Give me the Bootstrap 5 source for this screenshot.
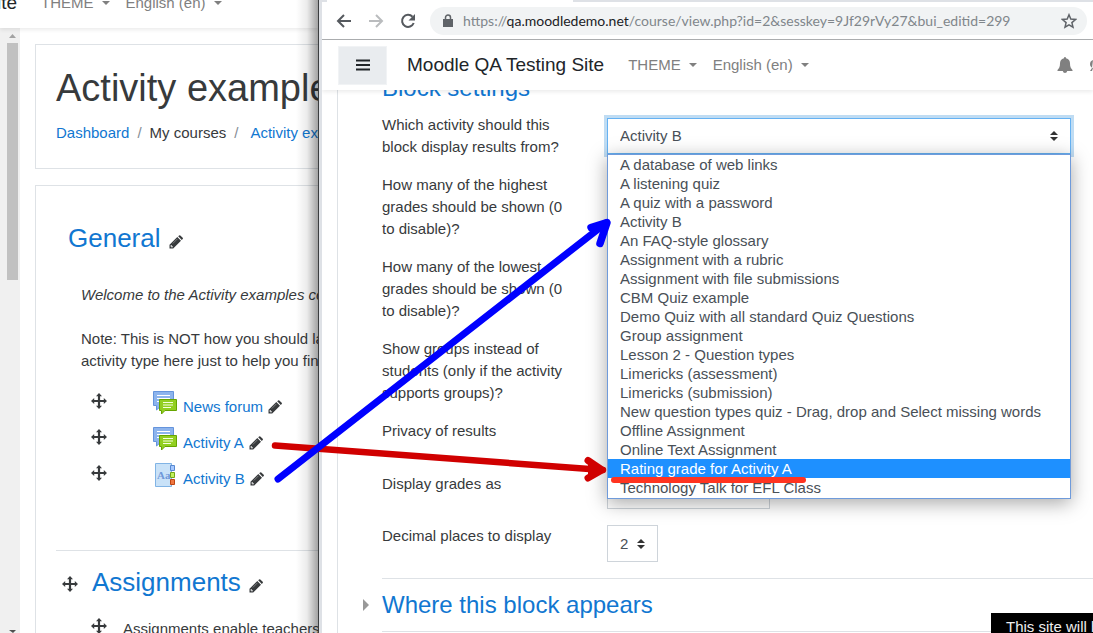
<!DOCTYPE html>
<html lang="en">
<head>
<meta charset="utf-8">
<meta name="viewport" content="width=device-width, initial-scale=1">
<title>Moodle QA Testing Site</title>
<link href="https://cdn.jsdelivr.net/npm/bootstrap@5.3.0/dist/css/bootstrap.min.css" rel="stylesheet">
<style>
body{font-family:"Liberation Sans",Arial,sans-serif;font-size:15px;line-height:22px;color:#373a3c}
a{color:#1177d1;text-decoration:none}
h1,h2,h3{font-weight:400;margin:0}
h1{font-size:38px;line-height:46px}
h2,h3{color:#1177d1}
h2{font-size:26px;line-height:32px}
h3{font-size:24px;line-height:28px}
svg{display:block;flex:none}
.back-window{flex:0 0 318px}
.back-window::after{content:"";position:absolute;top:0;bottom:0;right:0;width:22px;background:linear-gradient(90deg,transparent,rgba(0,0,0,.08) 50%,rgba(0,0,0,.36));z-index:3}
.front-window{border-left:1px solid #3c3e40;min-width:0}
.frame-edge{width:3px;background:#dee1e6}
.site-bar{height:50px;flex:none;color:#808080}
.bar-clip{height:28px;box-shadow:0 2px 4px rgba(0,0,0,.08);z-index:2}
.bar-shadow{box-shadow:0 2px 4px rgba(0,0,0,.08);z-index:2}
.site-name{font-size:19px;color:#212529}
.name-end{width:17px}
.menu-link{color:#808080}
.menu-link::after{margin-left:8px;border-top-width:4px;border-left-width:4px;border-right-width:4px;vertical-align:3px}
.scroll-track{flex:0 0 20px;background:#f0f0f0;padding:6px 2px 0 7px}
.scroll-thumb{height:237px;background:#c1c1c1}
.course-page{margin-left:15px}
.panel{border:1px solid #dee2e6;border-right:0;background:#fff}
.panel-head{padding:20px 0 24px 20px}
.panel-body{padding:36px 0 0 20px}
.crumbs{padding-top:11px}
.crumb-sep{color:#868e96;margin:0 8px}
.crumb-last{margin-left:4px}
.section-text{padding:30px 0 13px 25px}
.section-text p{margin:0 0 22px}
.section-text p:last-child{margin:0}
.activity-row{height:36px;padding-left:35px}
.activity-icon{margin-left:46px;padding-top:6px}
.activity-name{margin-left:6px;padding-top:11px}
.activity-rule{border-top:1px solid #dee2e6;margin-top:57px;padding-top:15px}
.section-title{padding-left:6px;gap:14px}
.tab-strip{height:2px;background:#dee1e6;padding-left:5px}
.tab-strip span{width:246px;background:#fff}
.toolbar{height:38px;border-bottom:1px solid #acaeb0;padding:0 6px 0 12px;gap:12px}
.omnibox{height:28px;background:#f1f3f4;border-radius:14px;padding:0 10px 0 12px;min-width:0}
.url-text{font-family:Lato,"Noto Sans",sans-serif;font-size:14px;color:#80868b;margin-left:9px}
.url-text b{font-weight:400;color:#202124}
.icon-btn{border:0;background:none;padding:0}
.hamburger{width:49px;height:39px;background:#e9ecef;border:1px solid #f1f3f5}
.front-name{margin-left:20px}
.form-area{border-left:1px solid #dee2e6;margin-left:15px;padding-left:44px}
.head-clip{height:12px}
.fields{padding-top:12px}
.field-row{gap:40px;padding:0 22px 16px 0}
.field-row label{flex:0 0 185px}
.select-box{height:37px;border:1px solid #ced4da;border-radius:0;padding:0 12px;color:#495057;font-size:15px;line-height:22px;appearance:none;background:#fff url("data:image/svg+xml,%3Csvg xmlns='http://www.w3.org/2000/svg' viewBox='0 0 8 10'%3E%3Cpath fill='%23333' d='M4 0 0 4h8zM0 6l4 4 4-4z'/%3E%3C/svg%3E") no-repeat right 12px center/8px 10px}
.select-focus{border-color:#66b2f3;box-shadow:0 0 0 3px #bfdcf3}
.select-focus,.select-short{height:36px}
.w-small{width:51px}.w-mid{width:163px}
.option-menu{top:100%;left:0;right:0;border:1px solid #6f9bdb;padding-bottom:1px;color:#495057;line-height:19px;box-shadow:0 4px 18px rgba(0,0,0,.35);z-index:3}
.option-menu li{padding:0 12px;white-space:nowrap}
.option-menu .chosen{background:#1e90ff;color:#fff}
.section-rule{border-top:1px solid #dee2e6}
.section-head{height:52px;margin-left:-19px;gap:13px}
.reset-note{right:0;bottom:0;width:102px;height:20px;background:#000;color:#eee;padding:3px 0 0 15px;z-index:4}
.marks{inset:0;z-index:5;pointer-events:none}
</style>
</head>
<body>
<svg width="0" height="0" class="position-absolute" aria-hidden="true">
<symbol id="pencil" viewBox="0 0 14 14"><path fill="#373a3c" d="M.5 13.5V9.800L8.300 2l3.700 3.700-7.800 7.800zM9.200 1.200l.9-.8q.6-.5 1.200 0l2.400 2.400q.5.6 0 1.200l-.9.900z"/><path fill="#fff" d="M1.500 10.800l.7-.7 1.700 1.700-.7.700h-.7v-1h-1z"/><path stroke="#aaa" stroke-width=".6" d="M3.800 8.500l4.600-4.600"/></symbol>
<symbol id="move" viewBox="0 0 16 16"><path fill="#373a3c" d="M8 0l3 3.200H9.100v3.700h3.700V5L16 8l-3.200 3V9.100H9.100v3.700H11L8 16l-3-3.200h1.900V9.100H3.200V11L0 8l3.200-3v1.900h3.700V3.200H5z"/></symbol>
<symbol id="forum" viewBox="0 0 24 24"><path fill="#8db4ed" stroke="#6594dc" d="M.5.5h20v14H8.500L3.500 19v-4.500h-3z"/><path stroke="#fff" d="M4 4.500h13M4 7.500h13M4 10.500h13"/><path fill="#92cf20" stroke="#66a500" d="M6.500 8.500h17v11H12L8.500 23v-3.500h-2z"/><path stroke="#f4ffdd" d="M10 11.500h10M10 14h10M10 16.500h8"/></symbol>
<symbol id="bell" viewBox="0 0 16 16"><path fill="#808080" d="M8 0q1 0 1 1.200C12 1.700 13 4 13 6.500c0 3.500 1 5 2.500 6.500v1h-5.300q-.3 2-2.200 2t-2.200-2H.5v-1C2 11.500 3 10 3 6.500 3 4 4 1.700 7 1.200 7 .3 7.500 0 8 0z"/></symbol>
</svg>
<div class="d-flex vh-100 overflow-hidden position-relative">
  <section class="back-window position-relative overflow-hidden d-flex flex-column text-nowrap">
    <header class="bar-clip position-relative bg-white">
      <div class="h-100 overflow-hidden d-flex align-items-end">
        <div class="site-bar d-flex align-items-center">
          <span class="site-name name-end d-flex justify-content-end">ite</span>
          <a href="#" class="menu-link dropdown-toggle ms-4">THEME</a>
          <a href="#" class="menu-link dropdown-toggle ms-3">English (en)</a>
        </div>
      </div>
    </header>
    <div class="d-flex flex-grow-1 overflow-hidden">
      <div class="scroll-track d-flex flex-column">
        <svg class="mx-auto mb-1" width="7" height="5"><path d="M0 4 3.500 0 7 4z" fill="#a3a3a3"/></svg>
        <div class="scroll-thumb"></div>
        <svg class="mx-auto mt-auto" width="7" height="3"><path d="M0 0h7L4 3z" fill="#505050"/></svg>
      </div>
      <main class="course-page flex-grow-1 pt-3 overflow-hidden">
        <div class="panel panel-head mb-3">
          <h1>Activity examples</h1>
          <nav class="crumbs d-flex"><a href="#">Dashboard</a><span class="crumb-sep">/</span>My courses<span class="crumb-sep">/</span><a href="#" class="crumb-last">Activity examples</a></nav>
        </div>
        <div class="panel panel-body h-100">
          <div class="d-flex align-items-center gap-2 ps-2 ms-1"><h2>General</h2><svg class="mt-2" width="14" height="14"><use href="#pencil"/></svg></div>
          <div class="section-text"><p><em>Welcome to the Activity examples course</em></p><p>Note: This is NOT how you should lay<br>activity type here just to help you find</p></div>
          <div class="activity-row d-flex"><svg class="mt-2" width="16" height="16"><use href="#move"/></svg><div class="activity-icon"><svg width="24" height="24"><use href="#forum"/></svg></div><div class="activity-name d-flex gap-1"><a href="#">News forum</a><svg class="mt-1" width="16" height="14"><use href="#pencil"/></svg></div></div>
          <div class="activity-row d-flex"><svg class="mt-2" width="16" height="16"><use href="#move"/></svg><div class="activity-icon"><svg width="24" height="24"><use href="#forum"/></svg></div><div class="activity-name d-flex gap-1"><a href="#">Activity A</a><svg class="mt-1" width="16" height="14"><use href="#pencil"/></svg></div></div>
          <div class="activity-row d-flex"><svg class="mt-2" width="16" height="16"><use href="#move"/></svg><div class="activity-icon"><svg width="24" height="24"><path fill="#c9e2f8" stroke="#81b4e5" d="M2.500.5h16v23h-16z"/><text x="4" y="16" font-family="Liberation Serif,serif" font-weight="bold" font-size="11" fill="#6f98d8">Aa</text><path fill="#a5c8ff" stroke="#5788d0" d="M17.500 2.500h4v5h-4z"/><path fill="#c1f05b" stroke="#73a717" d="M17.500 9.500h4v5h-4z"/><path fill="#ef7640" stroke="#bd4513" d="M17.500 16.500h4v5h-4z"/></svg></div><div class="activity-name d-flex gap-1"><a href="#">Activity B</a><svg class="mt-1" width="16" height="14"><use href="#pencil"/></svg></div></div>
          <div class="activity-rule"></div>
          <div class="section-title d-flex align-items-center"><svg class="mt-1" width="16" height="16"><use href="#move"/></svg><div class="d-flex align-items-center gap-2"><h2>Assignments</h2><svg class="mt-2" width="14" height="14"><use href="#pencil"/></svg></div></div>
          <div class="activity-row d-flex mt-3"><svg class="mt-1" width="16" height="16"><use href="#move"/></svg><span class="ms-3 pt-1">Assignments enable teachers</span></div>
        </div>
      </main>
    </div>
  </section>

  <section class="front-window flex-grow-1 d-flex bg-white">
    <div class="frame-edge flex-shrink-0"></div>
    <div class="flex-grow-1 overflow-hidden d-flex flex-column">
      <div class="tab-strip d-flex"><span></span></div>
      <div class="toolbar d-flex align-items-center flex-shrink-0">
        <button class="icon-btn" aria-label="Back"><svg width="20" height="20" fill="none" stroke="#55595e" stroke-width="2"><path d="M17 10H4M10 4l-6 6 6 6"/></svg></button>
        <button class="icon-btn" aria-label="Forward"><svg width="20" height="20" fill="none" stroke="#babcbe" stroke-width="2"><path d="M3 10h13M10 4l6 6-6 6"/></svg></button>
        <button class="icon-btn" aria-label="Reload"><svg width="20" height="20"><path d="M14.500 5.800A6 6 0 1 0 15.700 12" fill="none" stroke="#55595e" stroke-width="2"/><path d="M17 3v6.500h-6.500z" fill="#55595e"/></svg></button>
        <div class="omnibox d-flex align-items-center flex-grow-1">
          <svg width="12" height="14"><path d="M1 5h10v8H1z" fill="#5f6368"/><path d="M3.500 5V3.500a2.500 2.500 0 0 1 5 0V5" fill="none" stroke="#5f6368" stroke-width="1.500"/></svg>
          <span class="url-text text-nowrap flex-grow-1">https://<b>qa.moodledemo.net</b>/course/view.php?id=2&amp;sesskey=9Jf29rVy27&amp;bui_editid=299</span>
          <button class="icon-btn" aria-label="Bookmark"><svg width="16" height="16"><path d="m8 1.800 1.800 4.300 4.700.4-3.600 3.100 1.100 4.600L8 11.800l-4 2.400 1.100-4.600-3.600-3.100 4.700-.4z" fill="none" stroke="#5f6368" stroke-width="1.500"/></svg></button>
        </div>
      </div>
      <header class="site-bar bar-shadow position-relative bg-white d-flex align-items-center ps-3">
        <button class="hamburger d-flex align-items-center justify-content-center p-0" aria-label="Menu"><svg width="14" height="12"><path d="M0 1.500h14M0 6h14M0 10.500h14" stroke="#212529" stroke-width="2"/></svg></button>
        <a href="#" class="site-name front-name">Moodle QA Testing Site</a>
        <a href="#" class="menu-link dropdown-toggle ms-4">THEME</a>
        <a href="#" class="menu-link dropdown-toggle ms-3">English (en)</a>
        <svg class="ms-auto" width="16" height="16"><use href="#bell"/></svg>
        <svg class="ms-3" width="4" height="14"><path d="M4 2Q1 3 1 6t3 4l-1 3H1l2-3" fill="#808080"/></svg>
      </header>
      <main class="form-area flex-grow-1">
        <div class="head-clip overflow-hidden d-flex align-items-end"><h3>Block settings</h3></div>
        <form class="fields">
          <div class="field-row d-flex"><label for="act">Which activity should this block display results from?</label>
            <div class="flex-grow-1 pt-1"><div class="position-relative">
              <select id="act" class="select-box select-focus w-100 d-block"><option>Activity B</option></select>
              <ul class="option-menu position-absolute bg-white list-unstyled m-0" role="listbox" aria-label="Activities">
                <li role="option">A database of web links</li><li role="option">A listening quiz</li><li role="option">A quiz with a password</li><li role="option">Activity B</li><li role="option">An FAQ-style glossary</li><li role="option">Assignment with a rubric</li><li role="option">Assignment with file submissions</li><li role="option">CBM Quiz example</li><li role="option">Demo Quiz with all standard Quiz Questions</li><li role="option">Group assignment</li><li role="option">Lesson 2 - Question types</li><li role="option">Limericks (assessment)</li><li role="option">Limericks (submission)</li><li role="option">New question types quiz - Drag, drop and Select missing words</li><li role="option">Offline Assignment</li><li role="option">Online Text Assignment</li><li role="option" class="chosen" aria-selected="true">Rating grade for Activity A</li><li role="option">Technology Talk for EFL Class</li>
              </ul>
            </div></div></div>
          <div class="field-row d-flex"><label>How many of the highest grades should be shown (0 to disable)?</label></div>
          <div class="field-row d-flex"><label>How many of the lowest grades should be shown (0 to disable)?</label></div>
          <div class="field-row d-flex"><label>Show groups instead of students (only if the activity supports groups)?</label></div>
          <div class="field-row d-flex"><label for="priv">Privacy of results</label><select id="priv" class="select-box w-mid"></select></div>
          <div class="field-row d-flex"><label for="disp">Display grades as</label><select id="disp" class="select-box select-short w-mid"></select></div>
          <div class="field-row d-flex"><label for="dec">Decimal places to display</label><select id="dec" class="select-box w-small"><option>2</option></select></div>
        </form>
        <div class="section-rule"></div>
        <div class="section-head d-flex align-items-center"><svg width="6" height="12"><path d="M0 0l6 6-6 6z" fill="#999"/></svg><h3>Where this block appears</h3></div>
        <div class="section-rule"></div>
      </main>
    </div>
  </section>
  <div class="reset-note position-absolute overflow-hidden text-nowrap">This site will be</div>
  <svg class="marks position-absolute w-100 h-100" fill="none" stroke-linecap="round" stroke-linejoin="round" aria-hidden="true">
    <path d="M275 445.500 603 470" stroke="#d00000" stroke-width="6.500"/>
    <path d="M588 460.500l14 9.500-14 8" fill="#d00000" stroke="#d00000" stroke-width="7"/>
    <path d="M278 479 606 223" stroke="#00f" stroke-width="7"/>
    <path d="M591 227.500l16-5-7 21" stroke="#00f" stroke-width="7.500"/>
    <path d="M614 480H803" stroke="#ff3420" stroke-width="6"/>
  </svg>
</div>
<script src="https://cdn.jsdelivr.net/npm/bootstrap@5.3.0/dist/js/bootstrap.bundle.min.js"></script>
</body>
</html>
